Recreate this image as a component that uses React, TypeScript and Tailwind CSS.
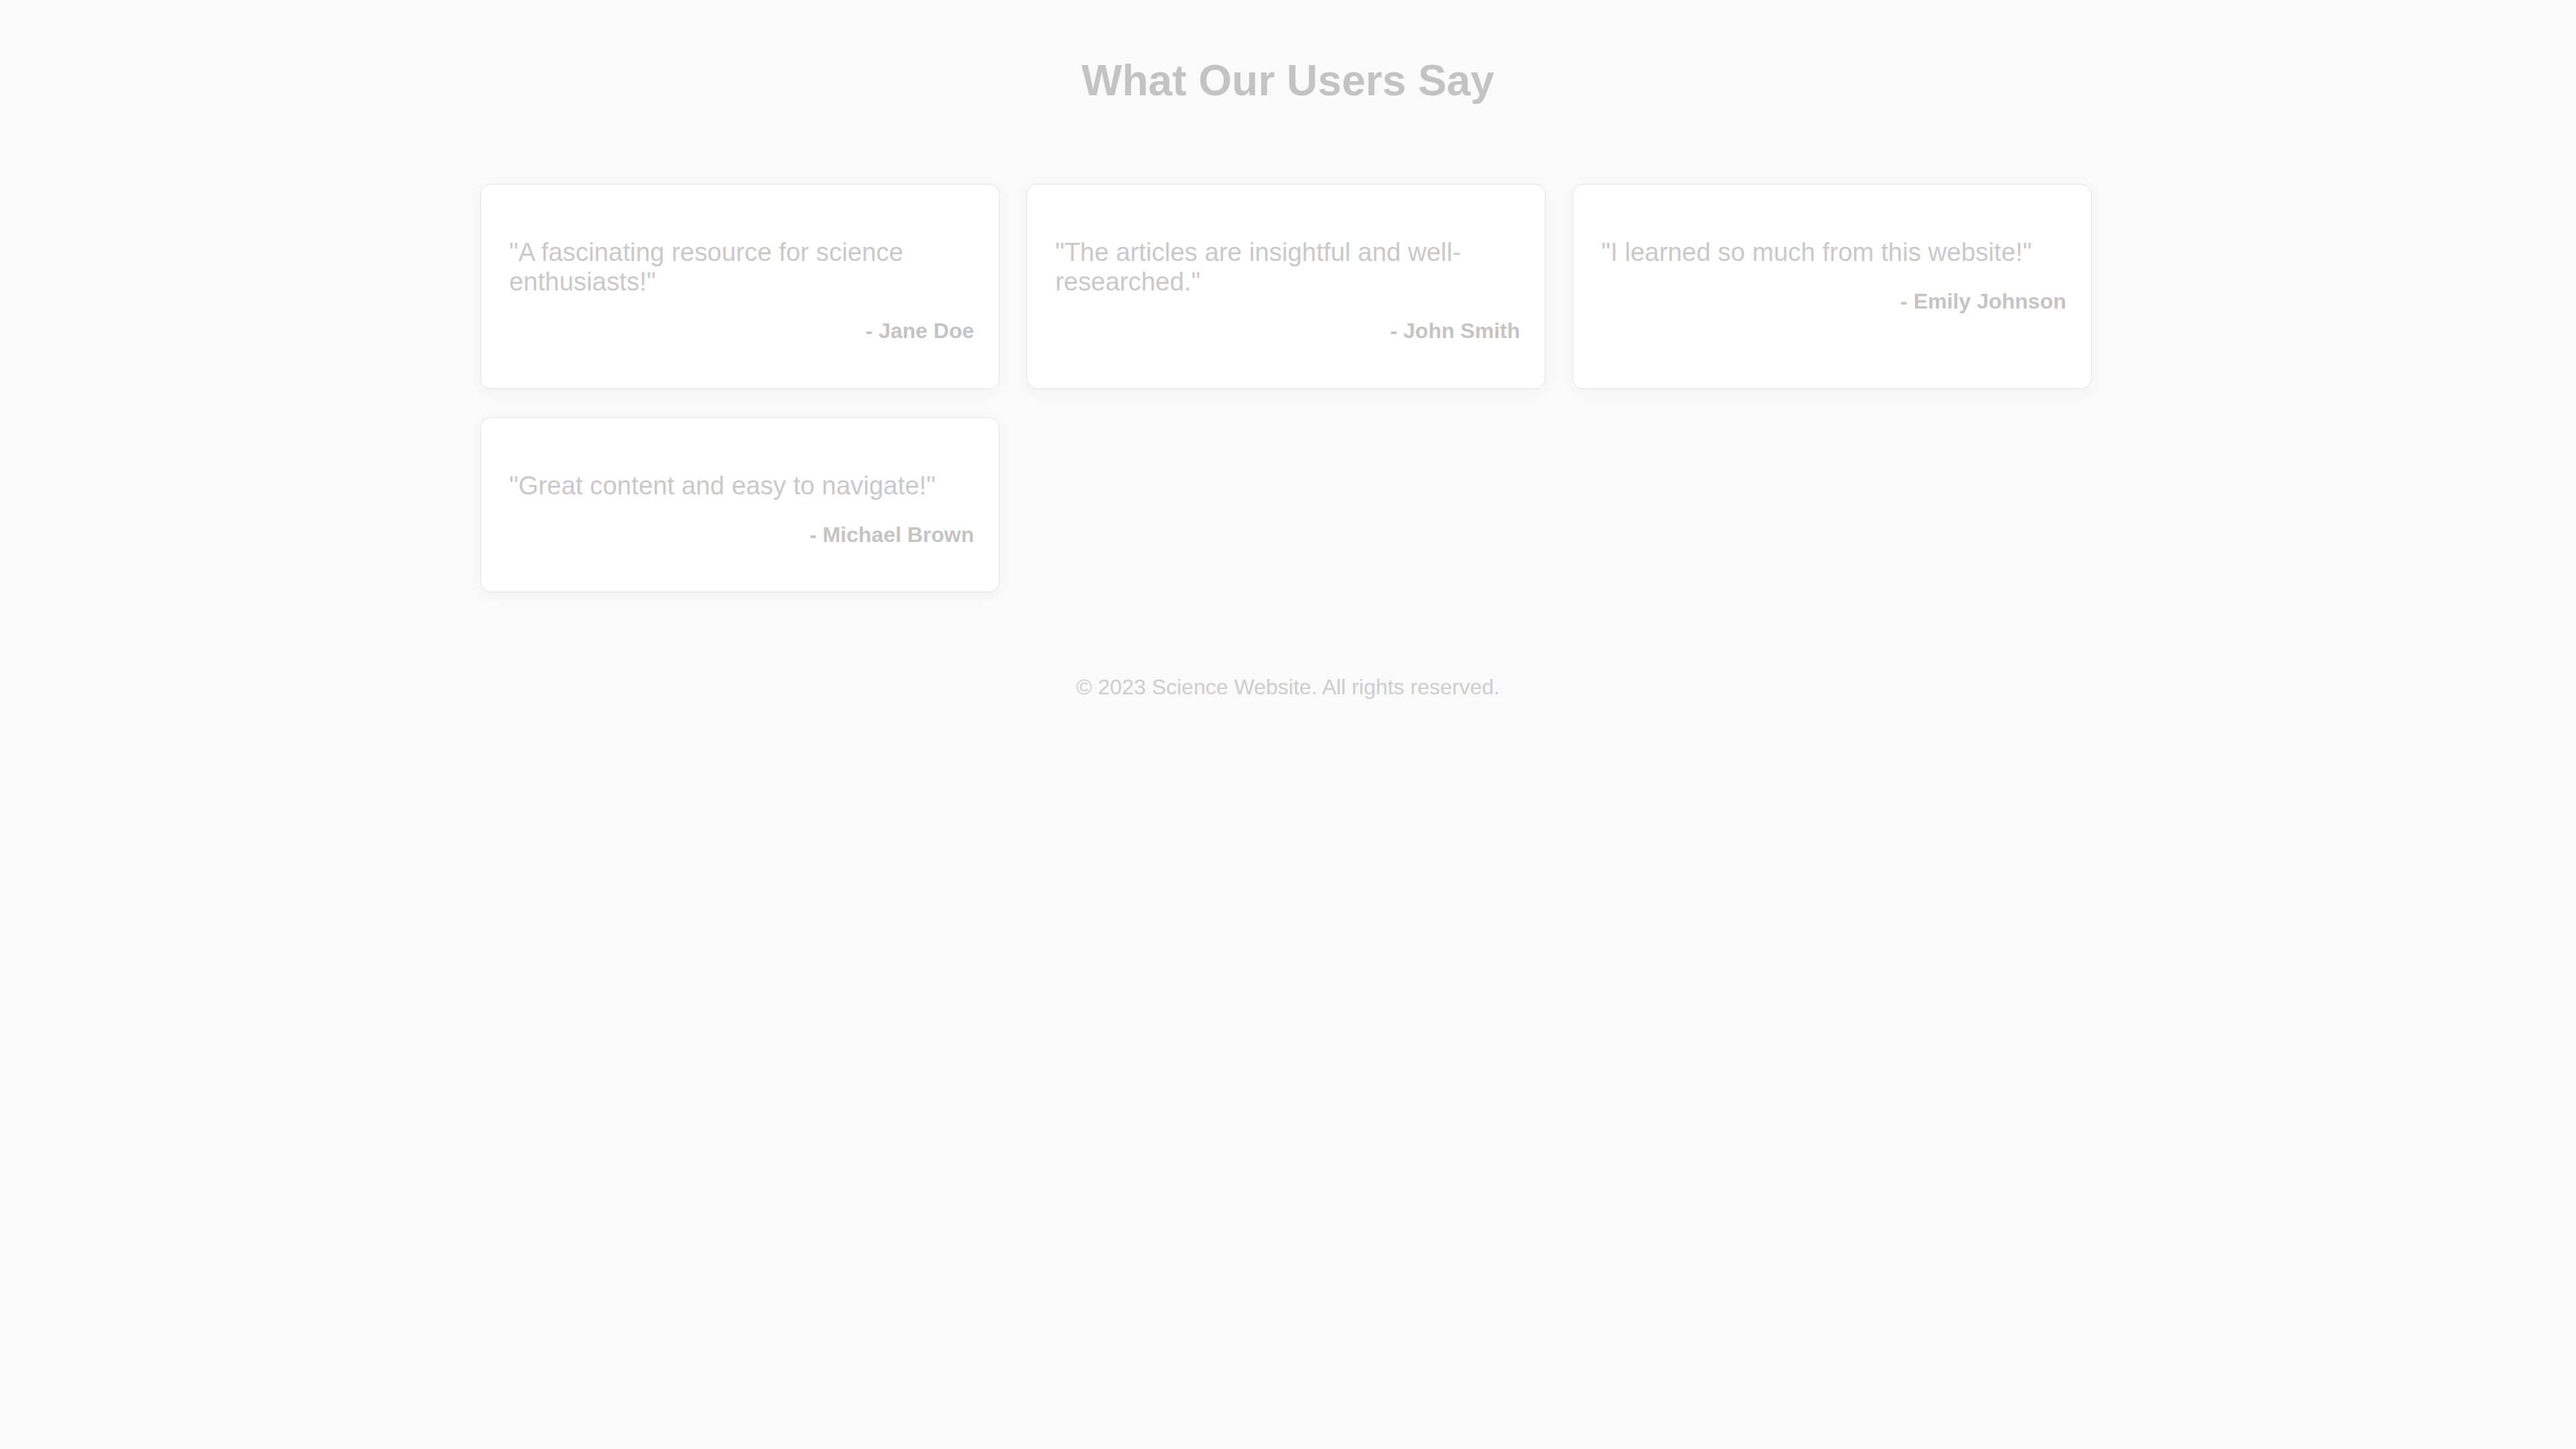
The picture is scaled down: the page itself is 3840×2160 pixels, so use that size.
type Testimonial = {
  quote: string;
  author: string;
};

const testimonials: Testimonial[] = [
  { quote: "A fascinating resource for science enthusiasts!", author: "Jane Doe" },
  { quote: "The articles are insightful and well-researched.", author: "John Smith" },
  { quote: "I learned so much from this website!", author: "Emily Johnson" },
  { quote: "Great content and easy to navigate!", author: "Michael Brown" },
];

function TestimonialCard({ quote, author }: Testimonial) {
  return (
    <article className="rounded-2xl border border-[#e4e4e4] bg-white pt-10 pb-10 pl-[42px] pr-[37px] shadow-[0_4px_18px_rgba(0,0,0,0.035)]">
      <p className="mt-[39px] text-[38.4px] leading-[1.149] text-[#c9c9c9]">"{quote}"</p>
      <p className="mt-[33px] mb-[27px] text-right text-[32px] font-bold leading-[1.149] text-[#c4c4c4]">- {author}</p>
    </article>
  );
}

export default function App() {
  return (
    <div className="min-h-screen bg-[#fafafa] font-['Liberation_Sans',Arial,sans-serif]">
      <h2 className="pt-[84px] text-center text-[64px] font-bold leading-[1.149] text-[#c3c3c3]">What Our Users Say</h2>

      <div className="mt-[116px] flex justify-center pr-[6px]">
        <section className="grid w-[2402px] grid-cols-3 gap-x-10 gap-y-[42px]">
          {testimonials.map((t) => (
            <TestimonialCard key={t.author} quote={t.quote} author={t.author} />
          ))}
        </section>
      </div>

      <footer className="mt-[123px] text-center text-[32px] leading-[1.149] text-[#cdcdcd]">
        © 2023 Science Website. All rights reserved.
      </footer>
    </div>
  );
}
